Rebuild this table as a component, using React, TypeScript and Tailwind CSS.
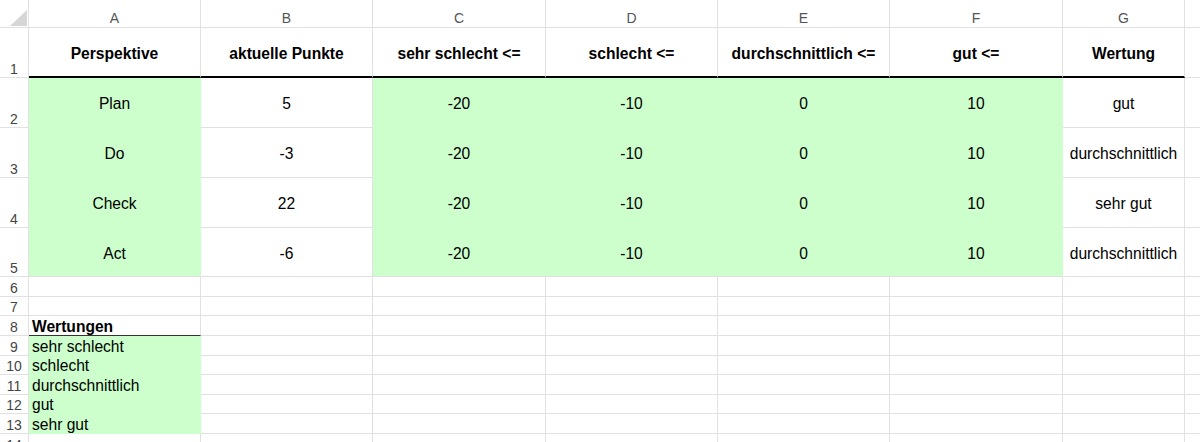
// Tabelle: PDCA-Wertung — Excel-Ansicht mit Spalten A–G und Zeilen 1–14
const COLS = [
  { key: 'A', w: 'w-[172px]' },
  { key: 'B', w: 'w-[172px]' },
  { key: 'C', w: 'w-[173px]' },
  { key: 'D', w: 'w-[172px]' },
  { key: 'E', w: 'w-[172px]' },
  { key: 'F', w: 'w-[173px]' },
  { key: 'G', w: 'w-[122px]' },
];

const HEAD = ['Perspektive', 'aktuelle Punkte', 'sehr schlecht <=', 'schlecht <=', 'durchschnittlich <=', 'gut <=', 'Wertung'];

const DATA = [
  ['Plan', '5', '-20', '-10', '0', '10', 'gut'],
  ['Do', '-3', '-20', '-10', '0', '10', 'durchschnittlich'],
  ['Check', '22', '-20', '-10', '0', '10', 'sehr gut'],
  ['Act', '-6', '-20', '-10', '0', '10', 'durchschnittlich'],
];

const GREEN = [true, false, true, true, true, true, false];

const SMALL = [
  { n: 6, h: 'h-[20px]', text: '' },
  { n: 7, h: 'h-[19px]', text: '' },
  { n: 8, h: 'h-[20px]', text: 'Wertungen', bold: true },
  { n: 9, h: 'h-[20px]', text: 'sehr schlecht', green: true },
  { n: 10, h: 'h-[19px]', text: 'schlecht', green: true },
  { n: 11, h: 'h-[20px]', text: 'durchschnittlich', green: true },
  { n: 12, h: 'h-[19px]', text: 'gut', green: true },
  { n: 13, h: 'h-[20px]', text: 'sehr gut', green: true },
  { n: 14, h: 'h-[20px]', text: '' },
];

function RowNum({ n }: { n: number }) {
  return (
    <div className="w-[29px] shrink-0 flex items-end justify-center pb-[1px] border-r border-b border-[#e1e1e1] text-[14px] leading-none text-[#444]">
      {n}
    </div>
  );
}

export default function App() {
  return (
    <div className="w-[1200px] h-[442px] overflow-hidden bg-white text-black font-['Liberation_Sans',Arial,sans-serif]">
      {/* Spaltenköpfe */}
      <div className="flex h-[28px]">
        <div className="w-[29px] shrink-0 border-r border-b border-[#e1e1e1] relative">
          <div className="absolute left-[10px] top-[10px] w-0 h-0 border-l-[17px] border-l-transparent border-b-[16px] border-b-[#d6d6d6]" />
        </div>
        {COLS.map((c) => (
          <div
            key={c.key}
            className={`${c.w} shrink-0 flex items-center justify-center pt-[10px] border-r border-b border-[#e1e1e1] text-[14px] text-[#555]`}
          >
            {c.key}
          </div>
        ))}
        <div className="flex-1 border-b border-[#e1e1e1]" />
      </div>

      {/* Zeile 1 */}
      <div className="flex h-[50px]">
        <RowNum n={1} />
        {COLS.map((c, i) => (
          <div
            key={c.key}
            className={`${c.w} shrink-0 flex items-center justify-center pt-[3px] border-r border-r-[#e1e1e1] border-b-2 border-b-black text-[15.6px] font-bold`}
          >
            {HEAD[i]}
          </div>
        ))}
        <div className="flex-1 border-b border-[#e1e1e1]" />
      </div>

      {/* Zeilen 2–5 */}
      {DATA.map((row, r) => (
        <div key={r} className={`flex ${r === 3 ? 'h-[49px]' : 'h-[50px]'}`}>
          <RowNum n={r + 2} />
          {COLS.map((c, i) => (
            <div
              key={c.key}
              className={`${c.w} shrink-0 flex items-center justify-center pt-[3px] border-r border-b text-[15.6px] ${
                GREEN[i]
                  ? 'bg-[#ccffcc] ' + (r === 3 ? 'border-r-[#ccffcc] border-b-[#e1e1e1]' : 'border-[#ccffcc]')
                  : 'border-[#e1e1e1]'
              }`}
            >
              {row[i]}
            </div>
          ))}
          <div className="flex-1 border-b border-[#e1e1e1]" />
        </div>
      ))}

      {/* Zeilen 6–14 */}
      {SMALL.map((s) => (
        <div key={s.n} className={`flex ${s.h}`}>
          <RowNum n={s.n} />
          {COLS.map((c, i) => {
            if (i === 0) {
              return (
                <div
                  key={c.key}
                  className={`${c.w} shrink-0 flex items-end pl-[3px] border-r border-b text-[15.6px] leading-none whitespace-nowrap ${
                    s.green ? 'bg-[#ccffcc] border-[#ccffcc]' : s.bold ? 'font-bold border-r-[#e1e1e1] border-b-[#333]' : 'border-[#e1e1e1]'
                  }`}
                >
                  {s.text}
                </div>
              );
            }
            return <div key={c.key} className={`${c.w} shrink-0 border-r border-b border-[#e1e1e1]`} />;
          })}
          <div className="flex-1 border-b border-[#e1e1e1]" />
        </div>
      ))}
    </div>
  );
}
